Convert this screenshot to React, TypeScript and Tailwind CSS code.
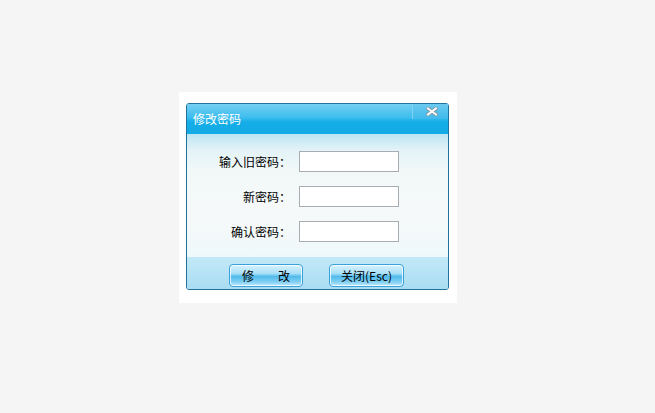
const font = { fontFamily: '"Noto Sans CJK SC", "Liberation Sans", sans-serif' };

const fields = ["输入旧密码：", "新密码：", "确认密码："];

const DialogButton = ({ label, wide }: { label: string; wide?: boolean }) => (
  <button
    className={`h-[23px] ${wide ? "w-[75px]" : "w-[74px]"} rounded-[4px] border border-[#3b9fd8] bg-[linear-gradient(#d8f2fd,#a9e0f8_40%,#52bbec_55%,#7fcff3_80%,#c4ecfc)] shadow-[inset_0_0_0_1px_rgba(255,255,255,0.75)] text-[12px] leading-none text-black`}
  >
    {label}
  </button>
);

export default function App() {
  return (
    <div className="min-h-[413px] bg-[#f5f5f5] pt-[92px] pl-[179px]" style={font}>
      <div className="w-[278px] h-[211px] bg-white pt-[11px] pl-[7px]">
        <div className="w-[263px] h-[187px] rounded-[3px] border border-[#21739a] flex flex-col overflow-hidden">
          {/* Title bar */}
          <div className="h-[30px] flex justify-between bg-[linear-gradient(#74cff3,#3dbdee_45%,#15ade7_60%,#12abe6)]">
            <span className="pl-[6px] pt-[9px] text-[12px] leading-none text-white">修改密码</span>
            <button className="w-[36px] h-[15px] border-l border-[#7fd2f2] bg-[linear-gradient(#6ccaf0,#3fbaec)] flex items-center justify-center pl-[3px]">
              <svg width="12" height="9" viewBox="0 0 12 9">
                <path d="M2 1.5 L10 7.5 M10 1.5 L2 7.5" stroke="#7d8f99" strokeWidth="3.6" strokeLinecap="square" />
                <path d="M2 1.5 L10 7.5 M10 1.5 L2 7.5" stroke="#ffffff" strokeWidth="2" strokeLinecap="square" />
              </svg>
            </button>
          </div>

          {/* Body */}
          <div className="h-[123px] pt-[17px] bg-[linear-gradient(#bde5f3,#e3f3f8_13%,#f2f8f8_30%,#f6f9f9_70%,#eef8fb)] flex flex-col gap-[14px]">
            {fields.map((f) => (
              <div key={f} className="flex items-center h-[21px]">
                <label className="w-[104px] text-right text-[12px] leading-none text-black">{f}</label>
                <input type="password" className="ml-[8px] w-[100px] h-[21px] border border-[#a7adb3] bg-white outline-none" />
              </div>
            ))}
          </div>

          {/* Footer */}
          <div className="flex-1 bg-[linear-gradient(#c3e9f7,#a9ddf3)] flex gap-[26px] pt-[7px] pl-[42px]">
            <DialogButton label="修　　改" />
            <DialogButton label="关闭(Esc)" wide />
          </div>
        </div>
      </div>
    </div>
  );
}
